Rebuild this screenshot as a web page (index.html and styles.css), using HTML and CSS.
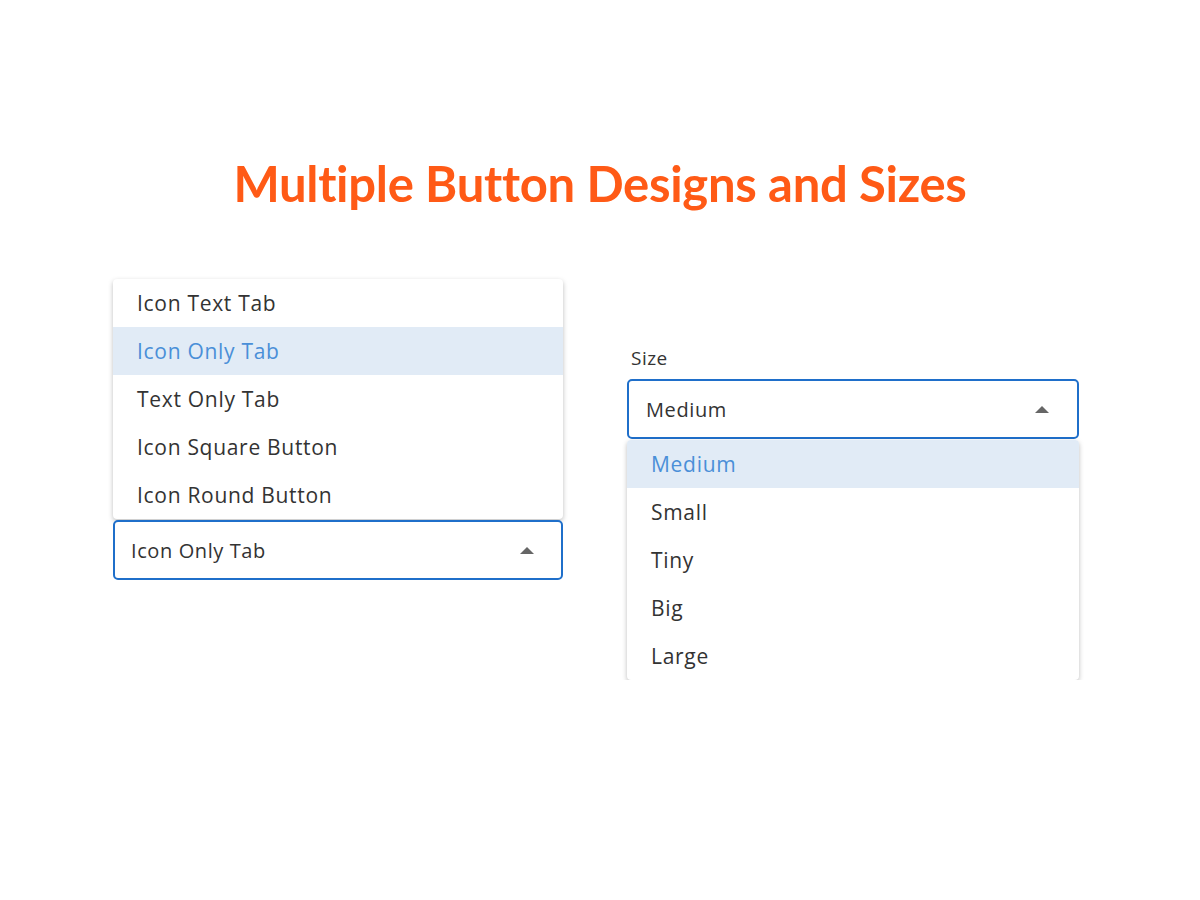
FILE: index.html
```html
<!DOCTYPE html>
<html lang="en">
<head>
<meta charset="utf-8">
<title>Multiple Button Designs and Sizes</title>
<link rel="stylesheet" href="styles.css">
</head>
<body>
<h1 class="title">Multiple Button Designs and Sizes</h1>
<div class="row">
  <div class="col col-left">
    <ul class="popup">
      <li class="opt">Icon Text Tab</li>
      <li class="opt opt-active">Icon Only Tab</li>
      <li class="opt">Text Only Tab</li>
      <li class="opt">Icon Square Button</li>
      <li class="opt">Icon Round Button</li>
    </ul>
    <div class="select">
      <span class="select-value">Icon Only Tab</span>
      <span class="caret"></span>
    </div>
  </div>
  <div class="col col-right">
    <div class="label">Size</div>
    <div class="select">
      <span class="select-value">Medium</span>
      <span class="caret"></span>
    </div>
    <ul class="popup popup-below">
      <li class="opt opt-active">Medium</li>
      <li class="opt">Small</li>
      <li class="opt">Tiny</li>
      <li class="opt">Big</li>
      <li class="opt">Large</li>
    </ul>
  </div>
</div>
</body>
</html>
```
FILE: styles.css
```css
html, body {
  margin: 0;
  padding: 0;
  background: #ffffff;
}
body {
  font-family: "Open Sans", "Noto Sans", sans-serif;
  color: #333333;
}
.title {
  margin: 0;
  padding-top: 151px;
  text-align: center;
  font-family: "Lato", "Open Sans", sans-serif;
  font-weight: 700;
  font-size: 49px;
  line-height: 64px;
  letter-spacing: -0.3px;
  color: #ff5a16;
}
.row {
  display: flex;
  align-items: flex-start;
  gap: 64px;
  padding-left: 113px;
  margin-top: 64px;
}
.col {
  display: flex;
  flex-direction: column;
}
.col-left {
  width: 450px;
}
.col-right {
  width: 452px;
  margin-top: 67px;
}
.popup {
  list-style: none;
  margin: 0;
  padding: 0;
  background: #ffffff;
  border-radius: 4px;
  box-shadow: 0 2px 5px rgba(0, 0, 0, 0.26);
  overflow: hidden;
}
.popup-below {
  margin-top: 1px;
}
.opt {
  height: 48px;
  line-height: 48px;
  padding-left: 24px;
  font-size: 21px;
  letter-spacing: 0.7px;
  color: #333333;
}
.opt-active {
  background: #e1ebf6;
  color: #4a8fd8;
}
.select {
  margin-top: 1px;
  height: 60px;
  box-sizing: border-box;
  border: 2px solid #1f6fca;
  border-radius: 5px;
  display: flex;
  align-items: center;
  justify-content: space-between;
  padding: 0 27px 0 16px;
  background: #ffffff;
}
.col-right .select {
  margin-top: 0;
  padding-left: 17px;
  padding-right: 28px;
}
.select-value {
  font-size: 20px;
  letter-spacing: 0.6px;
  color: #333333;
}
.caret {
  width: 0;
  height: 0;
  border-left: 7px solid transparent;
  border-right: 7px solid transparent;
  border-bottom: 7px solid #666666;
}
.label {
  font-size: 19px;
  line-height: 24px;
  letter-spacing: 0.5px;
  color: #333333;
  margin-left: 4px;
  margin-bottom: 9px;
}
```
